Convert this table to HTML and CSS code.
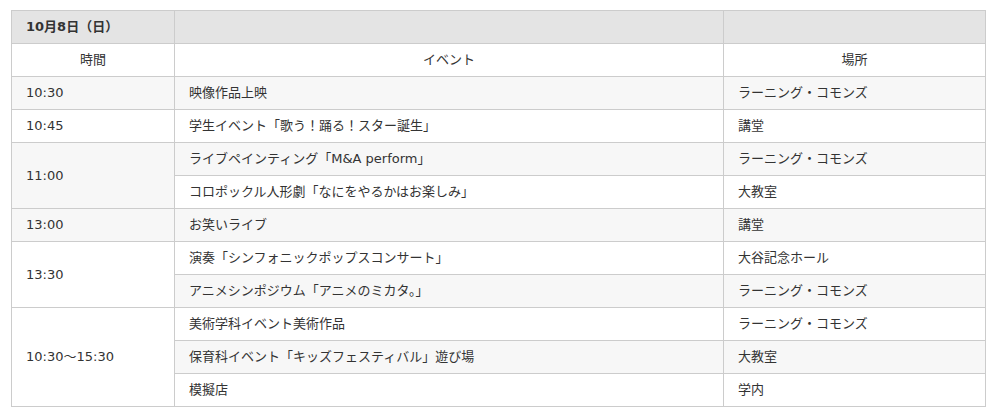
FILE: index.html
```html
<!DOCTYPE html>
<html lang="ja">
<head>
<meta charset="utf-8">
<link rel="stylesheet" href="styles.css">
</head>
<body>
<div class="wrap">
<table class="schedule">
  <tr class="day">
    <th class="day-title">10月8日（日）</th>
    <th class="day-mid"></th>
    <th></th>
  </tr>
  <tr class="cols">
    <td class="center">時間</td>
    <td class="center">イベント</td>
    <td class="center">場所</td>
  </tr>
  <tr class="odd">
    <td>10:30</td>
    <td>映像作品上映</td>
    <td>ラーニング・コモンズ</td>
  </tr>
  <tr class="even">
    <td>10:45</td>
    <td>学生イベント「歌う！踊る！スター誕生」</td>
    <td>講堂</td>
  </tr>
  <tr class="odd">
    <td rowspan="2">11:00</td>
    <td>ライブペインティング「M&amp;A perform」</td>
    <td>ラーニング・コモンズ</td>
  </tr>
  <tr class="even">
    <td>コロポックル人形劇「なにをやるかはお楽しみ」</td>
    <td>大教室</td>
  </tr>
  <tr class="odd">
    <td>13:00</td>
    <td>お笑いライブ</td>
    <td>講堂</td>
  </tr>
  <tr class="even">
    <td rowspan="2">13:30</td>
    <td>演奏「シンフォニックポップスコンサート」</td>
    <td>大谷記念ホール</td>
  </tr>
  <tr class="odd">
    <td>アニメシンポジウム「アニメのミカタ。」</td>
    <td>ラーニング・コモンズ</td>
  </tr>
  <tr class="even">
    <td rowspan="3">10:30〜15:30</td>
    <td>美術学科イベント美術作品</td>
    <td>ラーニング・コモンズ</td>
  </tr>
  <tr class="odd">
    <td>保育科イベント「キッズフェスティバル」遊び場</td>
    <td>大教室</td>
  </tr>
  <tr class="even">
    <td>模擬店</td>
    <td>学内</td>
  </tr>
</table>
</div>
</body>
</html>
```

FILE: styles.css
```css
html, body {
  margin: 0;
  padding: 0;
  background: #fff;
}
.wrap {
  padding: 10px 0 0 11px;
}
.schedule {
  border-collapse: collapse;
  width: 975px;
  table-layout: fixed;
  font-family: "DejaVu Sans", "Noto Sans CJK JP", sans-serif;
  font-size: 13px;
  color: #333;
}
.schedule th,
.schedule td {
  border: 1px solid #ccc;
  height: 33px;
  padding: 0 14px;
  text-align: left;
  vertical-align: middle;
  font-weight: normal;
  box-sizing: border-box;
  line-height: 16px;
}
.schedule tr.day th {
  background: #e4e4e4;
}
.schedule th.day-title {
  font-weight: bold;
  width: 163px;
}
.schedule th.day-mid {
  width: 549px;
}
.schedule tr.cols td {
  background: #fff;
}
.schedule td.center {
  text-align: center;
}
.schedule tr.odd td {
  background: #f7f7f7;
}
.schedule tr.even td {
  background: #fff;
}
```
